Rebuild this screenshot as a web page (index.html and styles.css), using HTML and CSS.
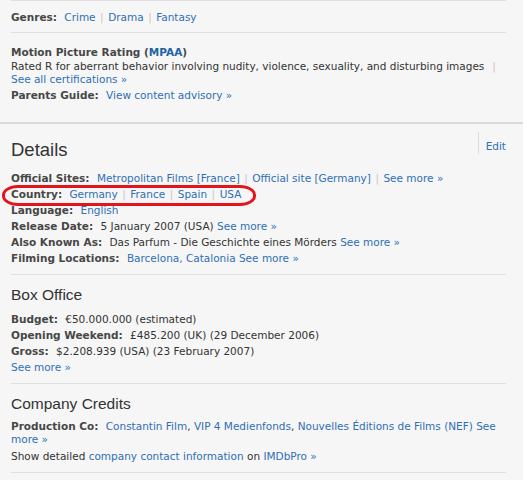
FILE: index.html
```html
<!DOCTYPE html>
<html>
<head>
<meta charset="utf-8">
<link rel="stylesheet" href="styles.css">
</head>
<body>
<div class="page">
  <section class="storyline">
    <div class="row"><span class="lbl">Genres:</span> <a href="#">Crime</a><span class="sep">|</span><a href="#">Drama</a><span class="sep">|</span><a href="#">Fantasy</a></div>
    <hr class="rule">
    <div class="row"><span class="lbl">Motion Picture Rating (<a href="#" class="strong">MPAA</a>)</span></div>
    <p class="wrap">Rated R for aberrant behavior involving nudity, violence, sexuality, and disturbing images <span class="sep">|</span> <a href="#">See all certifications »</a></p>
    <div class="row pg"><span class="lbl">Parents Guide:</span> <a href="#">View content advisory »</a></div>
  </section>

  <section class="details">
    <div class="head">
      <h2>Details</h2>
      <a href="#" class="edit">Edit</a>
    </div>
    <div class="row"><span class="lbl">Official Sites:</span> <a href="#">Metropolitan Films [France]</a><span class="sep">|</span><a href="#">Official site [Germany]</a><span class="sep">|</span><a href="#">See more »</a></div>
    <div class="row"><span class="lbl">Country:</span> <a href="#">Germany</a><span class="sep">|</span><a href="#">France</a><span class="sep">|</span><a href="#">Spain</a><span class="sep">|</span><a href="#">USA</a></div>
    <div class="row"><span class="lbl">Language:</span> <a href="#">English</a></div>
    <div class="row"><span class="lbl">Release Date:</span> 5 January 2007 (USA) <a href="#">See more »</a></div>
    <div class="row"><span class="lbl">Also Known As:</span> Das Parfum - Die Geschichte eines Mörders <a href="#">See more »</a></div>
    <div class="row"><span class="lbl">Filming Locations:</span> <a href="#">Barcelona, Catalonia</a> <a href="#">See more »</a></div>
    <hr class="rule">

    <h3>Box Office</h3>
    <div class="row"><span class="lbl">Budget:</span> €50.000.000 (estimated)</div>
    <div class="row"><span class="lbl">Opening Weekend:</span> £485.200 (UK) (29 December 2006)</div>
    <div class="row"><span class="lbl">Gross:</span> $2.208.939 (USA) (23 February 2007)</div>
    <div class="row"><a href="#">See more »</a></div>
    <hr class="rule">

    <h3>Company Credits</h3>
    <p class="wrap prod"><span class="lbl">Production Co:</span> <a href="#">Constantin Film</a>, <a href="#">VIP 4 Medienfonds</a>, <a href="#">Nouvelles Éditions de Films (NEF)</a> <a href="#">See more »</a></p>
    <div class="row">Show detailed <a href="#">company contact information</a> on <a href="#">IMDbPro »</a></div>
    <hr class="rule">
  </section>

  <div class="annot"></div>
</div>
</body>
</html>
```

FILE: styles.css
```css
html, body {
  margin: 0;
  padding: 0;
  background: #f6f6f6;
}

.page {
  position: relative;
  font-family: "DejaVu Sans", Verdana, sans-serif;
  font-size: 10.5px;
  color: #333;
  height: 480px;
  overflow: hidden;
}

a {
  color: #2f6fb5;
  text-decoration: none;
}

a.strong {
  font-weight: bold;
  color: #1f62a8;
}

.lbl {
  font-weight: bold;
  color: #474747;
  margin-right: 4px;
}

.sep {
  color: #c8c8c8;
  margin: 0 4.5px;
}

.storyline {
  margin: 0 17px 0 11px;
  border-top: 1px solid #e0e0e0;
  padding-top: 8px;
  padding-bottom: 19px;
}

.row {
  line-height: 16px;
  white-space: nowrap;
}

.wrap {
  margin: 0;
  line-height: 13px;
}

.rule {
  border: 0;
  border-top: 1px solid #e0e0e0;
  margin: 8px 0 10px;
  height: 0;
}

.storyline .rule {
  margin: 7px 0 11px;
}

.pg {
  margin-top: 1px;
}

.details {
  border-top: 2px solid #dadada;
  padding: 8px 17px 0 11px;
}

.head {
  display: flex;
  justify-content: space-between;
  align-items: flex-start;
}

h2 {
  margin: 0;
  font-family: "Liberation Sans", Arial, sans-serif;
  font-weight: normal;
  font-size: 18.5px;
  line-height: 26px;
  color: #333;
  padding-top: 5px;
}

.edit {
  border-left: 1px solid #ddd;
  padding: 8px 0 2px 7px;
  line-height: 12px;
}

.head + .row {
  margin-top: 7px;
}

h3 {
  margin: 0;
  font-family: "Liberation Sans", Arial, sans-serif;
  font-weight: normal;
  font-size: 15.5px;
  line-height: 20px;
  color: #333;
  margin-bottom: 6px;
}

.prod {
  margin-top: 2px;
  margin-bottom: 2px;
}

.annot {
  position: absolute;
  left: 2px;
  top: 185px;
  width: 248px;
  height: 15px;
  border: 3px solid #e3141c;
  border-radius: 16px / 10px;
}
```
